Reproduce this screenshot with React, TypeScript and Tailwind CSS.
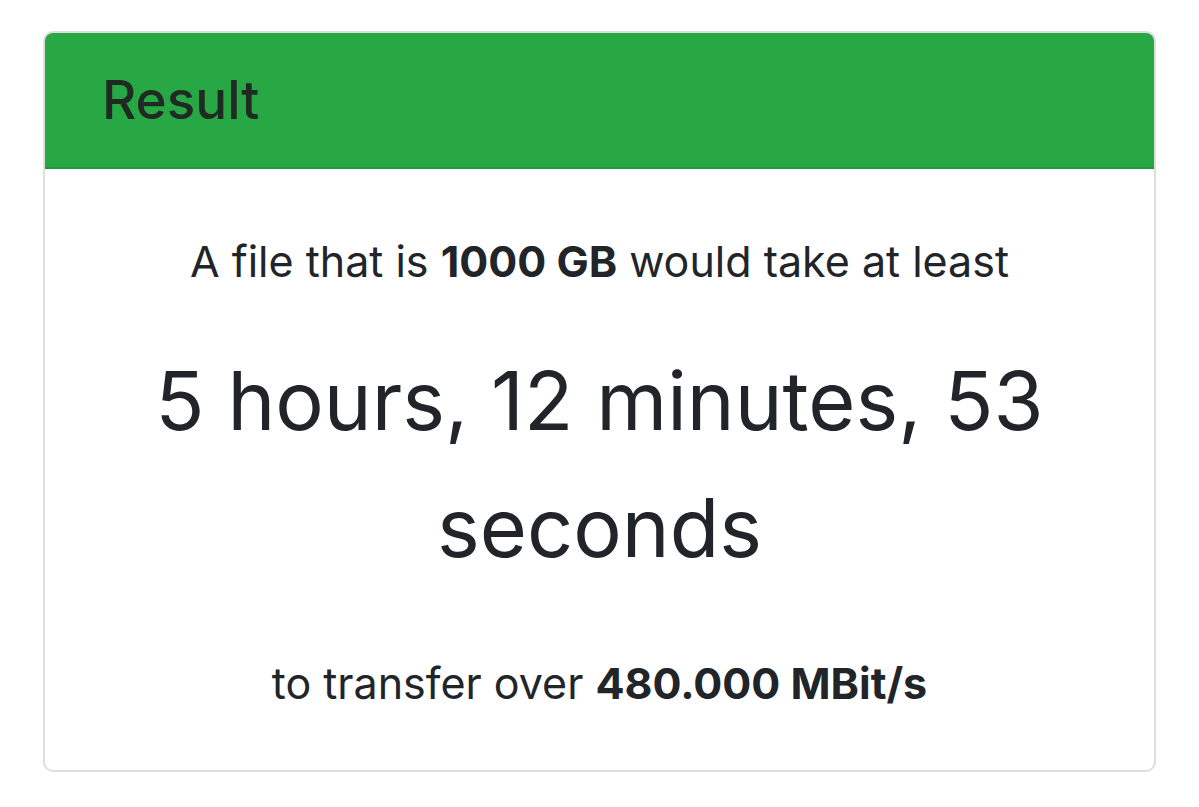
export default function App() {
  return (
    <div className="min-h-[807px] w-[1199px] bg-white pt-[31px] pl-[43px]" style={{ fontFamily: 'Inter, "Liberation Sans", sans-serif' }}>
      <div className="w-[1113px] h-[741px] rounded-[10px] border-2 border-[#dedede] overflow-hidden flex flex-col text-[#212529]">
        <div className="h-[136px] bg-[#28a745] flex items-center pl-[57px] border-b-2 border-[#23963d]">
          <h5 className="text-[53px] leading-none font-medium text-[#1e2a22]">Result</h5>
        </div>
        <div className="flex flex-col items-center text-center pt-[62px]">
          <p className="text-[43px] leading-[60px]">
            A file that is <b className="font-bold">1000 GB</b> would take at least
          </p>
          <h2 className="mt-[47px] text-[81px] leading-[127px] w-[960px]">5 hours, 12 minutes, 53 seconds</h2>
          <p className="mt-[61px] text-[43px] leading-[60px]">
            to transfer over <b className="font-bold">480.000 MBit/s</b>
          </p>
        </div>
      </div>
    </div>
  );
}
